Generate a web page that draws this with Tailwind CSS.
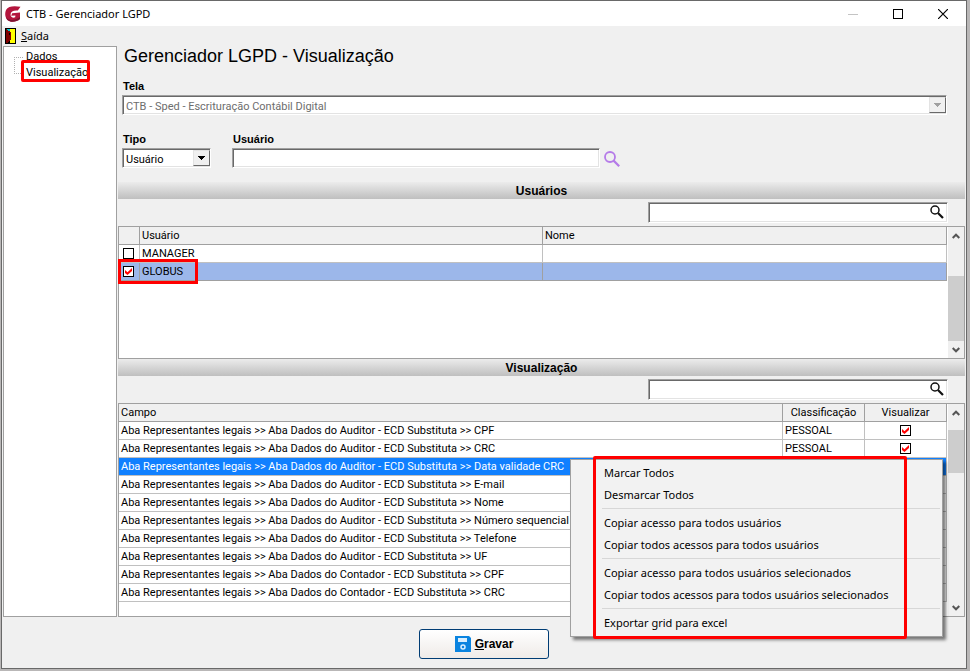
<!DOCTYPE html>
<html lang="pt-BR">
<head>
    <meta charset="UTF-8">
    <meta name="viewport" content="width=device-width, initial-scale=1.0">
    <title>CTB - Gerenciador LGPD</title>
    <script src="https://cdn.jsdelivr.net/npm/@tailwindcss/browser@4"></script>
</head>
<body class="flex min-h-screen flex-col bg-[#b9b7b7] pr-[3px] pb-[2px] pl-px font-['Roboto','Liberation_Sans',sans-serif] text-[11px] leading-[16px] text-black">
    <div class="flex flex-1 flex-col border border-[#696969] bg-[#f0f0f0]">

        <!-- Title bar -->
        <header class="flex h-[25px] items-center bg-white pl-[3px] font-['Noto_Sans','Open_Sans',sans-serif]">
            <svg class="h-4 w-4" viewBox="0 0 16 16">
                <path d="M15.500 .8C9 -.4 3.200 0 1 4-.6 7.600 .2 12.400 3.200 14.600 6.600 16.800 12 15.800 15 13L15 6.400 7.200 7.200 6.200 9.800 10.400 9.600 10.200 11.200C8.400 12.200 6 11.600 5.600 9.200 5.200 5.800 8 4.200 12.800 4.600Z" fill="#b3153d"/>
                <path d="M1 11C3.400 14.600 9.400 15.200 15 11L15 13C12 15.800 6.600 16.800 3.200 14.600 2.200 13.800 1.400 12.400 1 11Z" fill="#7d1230"/>
            </svg>
            <h1 class="ml-[5px] flex-1 text-[11px]">CTB - Gerenciador LGPD</h1>
            <button class="flex h-6 w-[46px] items-center justify-center" aria-label="Minimizar">
                <svg class="h-[10px] w-[10px]" viewBox="0 0 10 10" stroke="#c4c4c4"><path d="M0 5.500H10"/></svg>
            </button>
            <button class="flex h-6 w-11 items-center justify-center" aria-label="Maximizar">
                <svg class="h-[10px] w-[10px]" viewBox="0 0 10 10" fill="none" stroke="#000"><rect x=".5" y=".5" width="9" height="9"/></svg>
            </button>
            <button class="flex h-6 w-[46px] items-center justify-center" aria-label="Fechar">
                <svg class="h-[10px] w-[10px]" viewBox="0 0 10 10" stroke="#000" stroke-width="1.200"><path d="M0 0L10 10M10 0L0 10"/></svg>
            </button>
        </header>

        <!-- Menu -->
        <nav class="flex h-5 items-center pl-[3px] font-['Noto_Sans','Open_Sans',sans-serif]">
            <button class="flex items-center gap-[5px]">
                <svg class="h-4 w-[11px]" viewBox="0 0 11 16" shape-rendering="crispEdges">
                    <rect width="11" height="16" fill="#000"/>
                    <rect x="5" y="1" width="5" height="14" fill="#ff0"/>
                    <path d="M1 1L6 4V12L2 15H1Z" fill="#800000"/>
                    <path d="M2 1H5V3H3V2H2Z" fill="#0cc"/>
                    <rect x="4" y="5" width="1" height="2" fill="#000"/>
                </svg>
                <span><u>S</u>aída</span>
            </button>
        </nav>

        <div class="flex flex-1 gap-px px-px">
            <!-- Tree -->
            <aside class="w-[114px] border border-[#a0a0a0] bg-white pt-[2px]">
                <ul class="relative ml-[10px] before:absolute before:top-2 before:left-0 before:h-[17px] before:w-[9px] before:border before:border-r-0 before:border-dotted before:border-[#b0b0b0]">
                    <li class="pl-3"><a href="#">Dados</a></li>
                    <li class="relative pl-3">
                        <a href="#">Visualização</a>
                        <span class="absolute -top-[5px] left-[7px] h-[22px] w-[69px] rounded-[2px] border-3 border-[#f00]"></span>
                    </li>
                </ul>
            </aside>

            <main class="flex min-w-0 flex-1 flex-col">
                <h2 class="pl-[6px] font-['Liberation_Sans',sans-serif] text-[18px] leading-[20px]">Gerenciador LGPD - Visualização</h2>

                <form class="flex flex-col px-1 pt-3 pb-[14px]">
                    <label for="tela" class="pl-px font-['Liberation_Sans',sans-serif] font-bold">Tela</label>
                    <div class="mt-px mr-[14px] flex h-5 border border-t-[#a0a0a0] border-r-white border-b-white border-l-[#a0a0a0] bg-white py-px pl-px shadow-[inset_1px_1px_0_#696969,inset_-1px_-1px_0_#e3e3e3]">
                        <select id="tela" disabled class="min-w-0 flex-1 appearance-none pt-[2px] pl-[2px] text-[#6d6d6d] opacity-100">
                            <option>CTB - Sped - Escrituração Contábil Digital</option>
                        </select>
                        <span class="flex w-[17px] items-center justify-center border border-t-[#e3e3e3] border-r-[#696969] border-b-[#696969] border-l-[#e3e3e3] bg-[#f0f0f0]">
                            <svg class="h-1 w-[7px]" viewBox="0 0 7 4" fill="#a0a0a0" shape-rendering="crispEdges"><path d="M0 0H7L3.500 4Z"/></svg>
                        </span>
                    </div>
                    <div class="mt-4 flex gap-[21px]">
                        <div class="w-[89px]">
                            <label for="tipo" class="block pl-px font-['Liberation_Sans',sans-serif] font-bold">Tipo</label>
                            <div class="mt-px flex h-5 border border-t-[#a0a0a0] border-r-white border-b-white border-l-[#a0a0a0] bg-white py-px pl-px shadow-[inset_1px_1px_0_#696969,inset_-1px_-1px_0_#e3e3e3]">
                                <select id="tipo" class="min-w-0 flex-1 appearance-none pt-[2px] pl-[2px]">
                                    <option>Usuário</option>
                                </select>
                                <span class="flex w-[17px] items-center justify-center border border-t-[#e3e3e3] border-r-[#696969] border-b-[#696969] border-l-[#e3e3e3] bg-[#f0f0f0]">
                                    <svg class="h-1 w-[7px]" viewBox="0 0 7 4" shape-rendering="crispEdges"><path d="M0 0H7L3.500 4Z"/></svg>
                                </span>
                            </div>
                        </div>
                        <div class="flex-1">
                            <label for="usuario" class="block pl-px font-['Liberation_Sans',sans-serif] font-bold">Usuário</label>
                            <div class="mt-px flex items-center gap-1">
                                <input id="usuario" type="text" class="h-5 w-[368px] border border-t-[#a0a0a0] border-r-white border-b-white border-l-[#a0a0a0] bg-white px-1 shadow-[inset_1px_1px_0_#696969,inset_-1px_-1px_0_#e3e3e3]">
                                <button type="button" class="pt-[2px]" aria-label="Pesquisar usuário">
                                    <svg class="h-4 w-4" viewBox="0 0 16 16" fill="none" stroke="#b57be8" stroke-width="1.800"><circle cx="6" cy="6" r="5"/><path d="M9.600 9.600L15.200 15.200" stroke-width="2.200"/></svg>
                                </button>
                            </div>
                        </div>
                    </div>
                </form>

                <!-- Users -->
                <h3 class="h-[17px] bg-linear-to-b from-[#ececec] to-[#bfbfbf] text-center font-['Liberation_Sans',sans-serif] text-[12px] leading-[19px] font-bold">Usuários</h3>
                <div class="flex justify-end py-[3px] pr-[17px]">
                    <div class="flex h-[21px] w-[300px] items-center border border-t-[#a0a0a0] border-r-white border-b-white border-l-[#a0a0a0] bg-white pr-[3px] pb-[2px] shadow-[inset_1px_1px_0_#696969,inset_-1px_-1px_0_#e3e3e3]">
                        <input type="text" aria-label="Filtrar usuários" class="min-w-0 flex-1 px-1">
                        <svg class="h-[14px] w-[14px]" viewBox="0 0 14 14" fill="none" stroke="#111" stroke-width="1.500"><circle cx="5" cy="5" r="4"/><path d="M8 8L13 13" stroke-width="2.200"/></svg>
                    </div>
                </div>
                <div class="flex h-[133px] border border-[#a0a0a0] bg-white">
                    <div class="min-w-0 flex-1">
                        <table class="w-full table-fixed border-separate border-spacing-0">
                            <thead class="bg-[#f0f0f0] text-left">
                                <tr class="h-[18px]">
                                    <th class="w-[21px] border-r border-b border-[#a0a0a0] p-0"></th>
                                    <th class="w-[403px] border-r border-b border-[#a0a0a0] p-0 pt-px pl-[2px] font-normal">Usuário</th>
                                    <th class="border-r border-b border-[#a0a0a0] p-0 pt-px pl-[2px] font-normal">Nome</th>
                                </tr>
                            </thead>
                            <tbody>
                                <tr class="h-[18px]">
                                    <td class="border-r border-b border-[#c0c0c0] p-0 pl-1">
                                        <input type="checkbox" id="manager" class="block h-[11px] w-[11px] appearance-none border border-black bg-white">
                                    </td>
                                    <td class="border-r border-b border-[#c0c0c0] p-0 pt-px pl-[2px]"><label for="manager">MANAGER</label></td>
                                    <td class="border-r border-b border-[#c0c0c0] p-0"></td>
                                </tr>
                                <tr class="h-[18px] bg-[#9cb7ea]">
                                    <td class="relative border-r border-b border-[#a0a0a0] p-0 pl-1">
                                        <div class="grid h-[11px] w-[11px]">
                                            <input type="checkbox" id="globus" checked class="col-start-1 row-start-1 h-[11px] w-[11px] appearance-none border border-black bg-white">
                                            <svg class="pointer-events-none col-start-1 row-start-1 h-[11px] w-[11px]" viewBox="0 0 11 11" fill="#f00"><path d="M2 4L4.500 6.200 9 2V5L4.500 9 2 7Z"/></svg>
                                        </div>
                                        <span class="absolute -top-[4px] -left-px z-10 h-[25px] w-[80px] border-3 border-[#f00]"></span>
                                    </td>
                                    <td class="border-r border-b border-[#a0a0a0] p-0 pt-px pl-[2px]"><label for="globus">GLOBUS</label></td>
                                    <td class="border-r border-b border-[#a0a0a0] p-0"></td>
                                </tr>
                            </tbody>
                        </table>
                    </div>
                    <div class="ml-px flex w-4 flex-col bg-[#f0f0f0]">
                        <button class="flex h-[17px] items-center justify-center" aria-label="Rolar para cima">
                            <svg class="h-[6px] w-2" viewBox="0 0 8 6" fill="none" stroke="#555" stroke-width="2"><path d="M.7 5L4 1.700 7.300 5"/></svg>
                        </button>
                        <div class="flex flex-1 flex-col justify-end"><div class="h-[65px] bg-[#cdcdcd]"></div></div>
                        <button class="flex h-[17px] items-center justify-center" aria-label="Rolar para baixo">
                            <svg class="h-[6px] w-2" viewBox="0 0 8 6" fill="none" stroke="#555" stroke-width="2"><path d="M.7 1L4 4.300 7.300 1"/></svg>
                        </button>
                    </div>
                </div>

                <!-- Fields -->
                <h3 class="h-[17px] bg-linear-to-b from-[#ececec] to-[#bfbfbf] text-center font-['Liberation_Sans',sans-serif] text-[12px] leading-[19px] font-bold">Visualização</h3>
                <div class="flex justify-end py-[3px] pr-[17px]">
                    <div class="flex h-[21px] w-[300px] items-center border border-t-[#a0a0a0] border-r-white border-b-white border-l-[#a0a0a0] bg-white pr-[3px] pb-[2px] shadow-[inset_1px_1px_0_#696969,inset_-1px_-1px_0_#e3e3e3]">
                        <input type="text" aria-label="Filtrar campos" class="min-w-0 flex-1 px-1">
                        <svg class="h-[14px] w-[14px]" viewBox="0 0 14 14" fill="none" stroke="#111" stroke-width="1.500"><circle cx="5" cy="5" r="4"/><path d="M8 8L13 13" stroke-width="2.200"/></svg>
                    </div>
                </div>
                <div class="relative flex flex-1 border border-[#a0a0a0] bg-white">
                    <div class="min-w-0 flex-1">
                        <table class="w-full table-fixed border-separate border-spacing-0">
                            <thead class="bg-[#f0f0f0]">
                                <tr class="h-[18px]">
                                    <th class="border-r border-b border-[#a0a0a0] p-0 pt-px pl-[2px] text-left font-normal">Campo</th>
                                    <th class="w-[82px] border-r border-b border-[#a0a0a0] p-0 pt-px font-normal">Classificação</th>
                                    <th class="w-[82px] border-r border-b border-[#a0a0a0] p-0 pt-px font-normal">Visualizar</th>
                                </tr>
                            </thead>
                            <tbody id="campos"></tbody>
                        </table>
                    </div>
                    <div class="ml-px flex w-4 flex-col bg-[#f0f0f0]">
                        <button class="flex h-[17px] items-center justify-center" aria-label="Rolar para cima">
                            <svg class="h-[6px] w-2" viewBox="0 0 8 6" fill="none" stroke="#555" stroke-width="2"><path d="M.7 5L4 1.700 7.300 5"/></svg>
                        </button>
                        <div class="flex-1 pt-[9px]"><div class="h-[43px] bg-[#cdcdcd]"></div></div>
                        <button class="flex h-[17px] items-center justify-center" aria-label="Rolar para baixo">
                            <svg class="h-[6px] w-2" viewBox="0 0 8 6" fill="none" stroke="#555" stroke-width="2"><path d="M.7 1L4 4.300 7.300 1"/></svg>
                        </button>
                    </div>

                    <!-- Context menu -->
                    <div class="absolute top-[55px] right-[21px] w-[373px] border border-[#a0a0a0] bg-[#f2f2f2] py-[2px] font-['Noto_Sans','Open_Sans',sans-serif] shadow-[3px_3px_3px_rgba(0,0,0,0.5)]">
                        <button class="block h-[22px] w-full pl-[33px] text-left">Marcar Todos</button>
                        <button class="block h-[22px] w-full pl-[33px] text-left">Desmarcar Todos</button>
                        <hr class="my-[2px] mr-[2px] ml-[31px] h-[2px] border-t border-[#d7d7d7]">
                        <button class="block h-[22px] w-full pl-[33px] text-left">Copiar acesso para todos usuários</button>
                        <button class="block h-[22px] w-full pl-[33px] text-left">Copiar todos acessos para todos usuários</button>
                        <hr class="my-[2px] mr-[2px] ml-[31px] h-[2px] border-t border-[#d7d7d7]">
                        <button class="block h-[22px] w-full pl-[33px] text-left">Copiar acesso para todos usuários selecionados</button>
                        <button class="block h-[22px] w-full pl-[33px] text-left">Copiar todos acessos para todos usuários selecionados</button>
                        <hr class="my-[2px] mr-[2px] ml-[31px] h-[2px] border-t border-[#d7d7d7]">
                        <button class="block h-[22px] w-full pl-[33px] text-left">Exportar grid para excel</button>
                        <span class="pointer-events-none absolute -top-1 left-[22px] h-[183px] w-[314px] rounded-[2px] border-3 border-[#f00]"></span>
                    </div>
                </div>
            </main>
        </div>

        <footer class="flex justify-center pt-3 pb-[9px]">
            <button class="flex h-[30px] w-[130px] items-center justify-center gap-1 rounded-[3px] border border-[#003c74] bg-linear-to-b from-white to-[#efebe8] font-['Liberation_Sans',sans-serif] text-[12px] font-bold">
                <svg class="h-4 w-4" viewBox="0 0 16 16">
                    <path d="M0 0H14L16 2V16H0Z" fill="#0a84e0"/>
                    <rect x="3" y="2" width="9" height="4" fill="#d9efff"/>
                    <circle cx="8" cy="11" r="2" fill="none" stroke="#d9efff" stroke-width="1.500"/>
                </svg>
                <span><u>G</u>ravar</span>
            </button>
        </footer>
    </div>

    <script>
        const auditor = "Aba Representantes legais >> Aba Dados do Auditor - ECD Substituta >> ";
        const contador = "Aba Representantes legais >> Aba Dados do Contador - ECD Substituta >> ";
        const campos = [
            { campo: auditor + "CPF", classificacao: "PESSOAL", visualizar: true },
            { campo: auditor + "CRC", classificacao: "PESSOAL", visualizar: true },
            { campo: auditor + "Data validade CRC", selected: true },
            { campo: auditor + "E-mail" },
            { campo: auditor + "Nome" },
            { campo: auditor + "Número sequencial" },
            { campo: auditor + "Telefone" },
            { campo: auditor + "UF" },
            { campo: contador + "CPF" },
            { campo: contador + "CRC" }
        ];

        const checkbox = `
            <div class="mx-auto grid h-[11px] w-[11px]">
                <input type="checkbox" checked aria-label="Visualizar" class="col-start-1 row-start-1 h-[11px] w-[11px] appearance-none border border-black bg-white">
                <svg class="pointer-events-none col-start-1 row-start-1 h-[11px] w-[11px]" viewBox="0 0 11 11" fill="#f00"><path d="M2 4L4.500 6.200 9 2V5L4.500 9 2 7Z"/></svg>
            </div>`;

        document.getElementById("campos").innerHTML = campos.map(row => `
            <tr class="h-[18px] ${row.selected ? "bg-[#1080ff] text-white" : ""}">
                <td class="truncate border-r border-b border-[#c0c0c0] p-0 pt-px pl-[2px]">${row.campo.replaceAll(">", "&gt;")}</td>
                <td class="border-r border-b border-[#c0c0c0] p-0 pt-px pl-[2px]">${row.classificacao || ""}</td>
                <td class="border-r border-b border-[#c0c0c0] p-0">${row.visualizar ? checkbox : ""}</td>
            </tr>`).join("");
    </script>
</body>
</html>
